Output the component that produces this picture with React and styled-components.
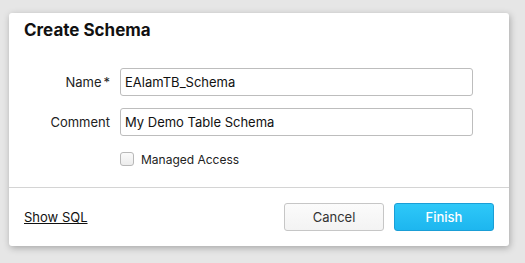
import React from "react";
import styled, { createGlobalStyle } from "styled-components";

const GlobalStyle = createGlobalStyle`
  html, body {
    margin: 0;
    padding: 0;
    background: #e6e6e6;
    font-family: Inter, "Noto Sans", sans-serif;
  }
`;

const Page = styled.div`
  width: 525px;
  height: 263px;
  padding: 13px 0 0 9px;
  box-sizing: border-box;
`;

const Dialog = styled.div`
  width: 500px;
  background: #fff;
  border-radius: 3px;
  box-shadow: 1px 2px 7px rgba(0, 0, 0, 0.28);
  display: flex;
  flex-direction: column;
`;

const Header = styled.div`
  padding: 5px 15px 0 15px;
`;

const Title = styled.h1`
  margin: 0;
  font-size: 17px;
  line-height: 24px;
  font-weight: 700;
  color: #111;
`;

const Form = styled.div`
  display: grid;
  grid-template-columns: 101px 353px;
  column-gap: 10px;
  row-gap: 12px;
  align-items: center;
  margin: 26px 0 17px 0;
`;

const Label = styled.label`
  justify-self: end;
  font-size: 13px;
  color: #222;
`;

const Required = styled.span`
  margin-left: 2px;
`;

const Input = styled.input`
  height: 28px;
  box-sizing: border-box;
  border: 1px solid #bdbdbd;
  border-radius: 3px;
  padding: 0 4px;
  font-family: inherit;
  font-size: 13px;
  color: #111;
  outline: none;
`;

const CheckRow = styled.label`
  grid-column: 2;
  display: flex;
  align-items: center;
  gap: 7px;
  height: 22px;
  font-size: 12px;
  color: #222;
`;

const Box = styled.span`
  width: 14px;
  height: 14px;
  box-sizing: border-box;
  border: 1px solid #b8b8b8;
  border-radius: 3px;
  background: linear-gradient(#fafafa, #ececec);
`;

const Footer = styled.div`
  border-top: 1px solid #d4d4d4;
  padding: 15px 15px 15px 15px;
  display: flex;
  align-items: center;
  gap: 10px;
`;

const SqlLink = styled.a`
  margin-right: auto;
  font-size: 13px;
  color: #111;
  text-decoration: underline;
  cursor: pointer;
`;

const Button = styled.button`
  width: 100px;
  height: 28px;
  box-sizing: border-box;
  border-radius: 3px;
  font-family: inherit;
  font-size: 13px;
  border: 1px solid ${(p) => (p.$primary ? "#1a9ed6" : "#c6c6c6")};
  background: ${(p) =>
    p.$primary
      ? "linear-gradient(#2ec8f8, #1db6ef)"
      : "linear-gradient(#fbfbfb, #f3f3f3)"};
  color: ${(p) => (p.$primary ? "#fff" : "#333")};
  font-weight: ${(p) => (p.$primary ? 500 : 400)};
  cursor: pointer;
`;

export default function App() {
  return (
    <Page>
      <GlobalStyle />
      <Dialog>
        <Header>
          <Title>Create Schema</Title>
        </Header>
        <Form>
          <Label>
            Name<Required>*</Required>
          </Label>
          <Input defaultValue="EAlamTB_Schema" />
          <Label>Comment</Label>
          <Input defaultValue="My Demo Table Schema" />
          <CheckRow>
            <Box />
            Managed Access
          </CheckRow>
        </Form>
        <Footer>
          <SqlLink>Show SQL</SqlLink>
          <Button>Cancel</Button>
          <Button $primary>Finish</Button>
        </Footer>
      </Dialog>
    </Page>
  );
}
